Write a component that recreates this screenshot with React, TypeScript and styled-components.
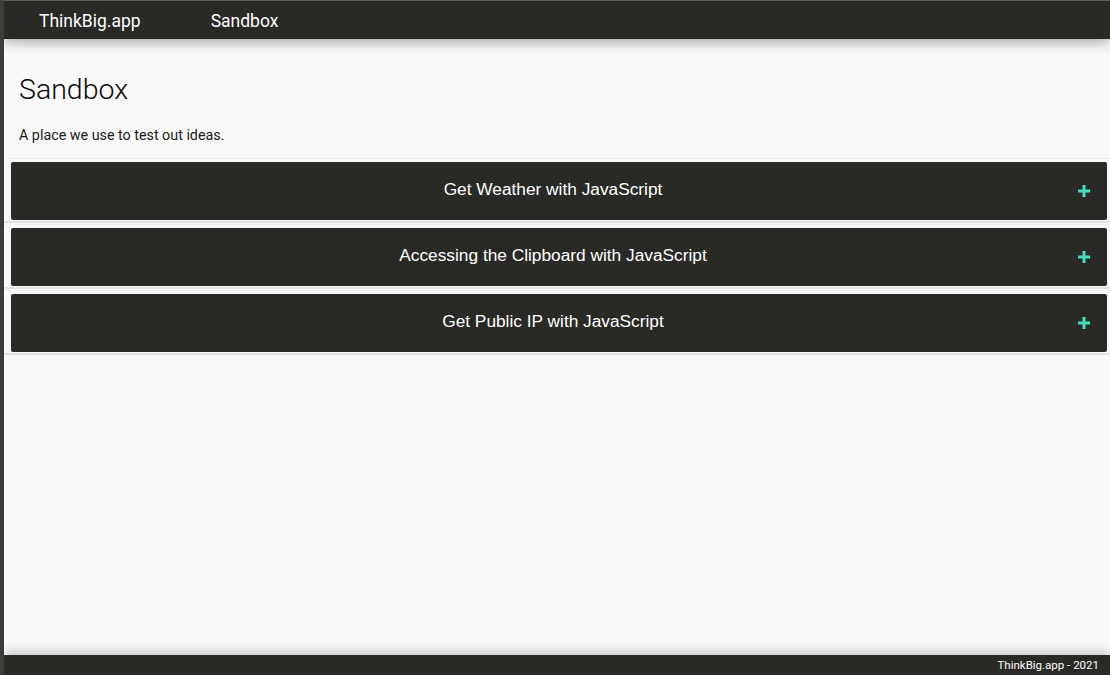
import { ReactElement } from 'react';
import styled, { createGlobalStyle } from 'styled-components';

const GlobalStyle = createGlobalStyle`
  html, body {
    margin: 0;
    padding: 0;
    height: 100%;
    background-color: #3c3c3c;
  }

  #root {
    height: 100%;
  }

  * {
    box-sizing: border-box;
  }
`;

const Page = styled.div`
  background-color: #f9f9f9;
  border-left: 4px solid #3c3c3c;
  border-top: 1px solid #5a5a5a;
  display: flex;
  flex-direction: column;
  height: 100vh;
  overflow: hidden;
`;

const Header = styled.header`
  align-items: center;
  background-color: #292a25;
  box-shadow: 0 4px 12px rgba(0, 0, 0, 0.3);
  display: flex;
  flex: 0 0 38px;
  gap: 70px;
  padding: 2px 35px 0;
  position: relative;
  z-index: 1;
`;

const NavLink = styled.a`
  color: #ffffff;
  font-family: Roboto, 'Noto Sans', sans-serif;
  font-size: 17.5px;
  font-weight: 400;
  text-decoration: none;
`;

const Main = styled.main`
  flex: 1 1 auto;
  padding-top: 33px;
`;

const Intro = styled.section`
  padding: 0 15px;
`;

const Title = styled.h1`
  color: #0a0a0a;
  font-family: Roboto, 'Noto Sans', sans-serif;
  font-size: 28.5px;
  font-weight: 300;
  line-height: 36px;
  margin: 0 0 18px;
`;

const Lead = styled.p`
  color: #1a1a1a;
  font-family: Roboto, 'Noto Sans', sans-serif;
  font-size: 14.3px;
  line-height: 18px;
  margin: 0 0 14px;
`;

const Section = styled.div`
  border-bottom: 2px solid #e2e2e2;
  border-top: 1px solid #efefef;
  margin-bottom: 1px;
  padding: 3px 3px 1px 7px;
`;

const Item = styled.button`
  align-items: center;
  background-color: #292a25;
  border: none;
  border-radius: 2px;
  color: #ffffff;
  cursor: pointer;
  display: flex;
  font-family: 'Liberation Sans', Arial, sans-serif;
  font-size: 17.3px;
  height: 58px;
  justify-content: center;
  padding: 0 52px 3px 40px;
  position: relative;
  width: 100%;
`;

const PlusIcon = styled.svg`
  position: absolute;
  right: 17px;
  top: 50%;
  transform: translateY(-50%);
`;

const Footer = styled.footer`
  align-items: center;
  background-color: #292a25;
  box-shadow: 0 -4px 10px rgba(0, 0, 0, 0.18);
  color: #ffffff;
  display: flex;
  flex: 0 0 20px;
  font-family: Roboto, 'Noto Sans', sans-serif;
  font-size: 11.5px;
  justify-content: flex-end;
  padding: 0 11px;
`;

const topics = [
  'Get Weather with JavaScript',
  'Accessing the Clipboard with JavaScript',
  'Get Public IP with JavaScript',
];

function Plus(): ReactElement {
  return (
    <PlusIcon width="12" height="12" viewBox="0 0 12 12">
      <defs>
        <linearGradient id="plusGrad" x1="0" y1="0" x2="1" y2="0">
          <stop offset="0" stopColor="#3fd6c4" />
          <stop offset="1" stopColor="#44e8b4" />
        </linearGradient>
      </defs>
      <rect x="4.5" y="0" width="3" height="12" fill="url(#plusGrad)" />
      <rect x="0" y="4.5" width="12" height="3" fill="url(#plusGrad)" />
    </PlusIcon>
  );
}

function App(): ReactElement {
  return (
    <>
      <GlobalStyle />
      <Page>
        <Header>
          <NavLink href="#">ThinkBig.app</NavLink>
          <NavLink href="#">Sandbox</NavLink>
        </Header>
        <Main>
          <Intro>
            <Title>Sandbox</Title>
            <Lead>A place we use to test out ideas.</Lead>
          </Intro>
          {topics.map(topic => (
            <Section key={topic}>
              <Item>
                {topic}
                <Plus />
              </Item>
            </Section>
          ))}
        </Main>
        <Footer>ThinkBig.app - 2021</Footer>
      </Page>
    </>
  );
}

export default App;
